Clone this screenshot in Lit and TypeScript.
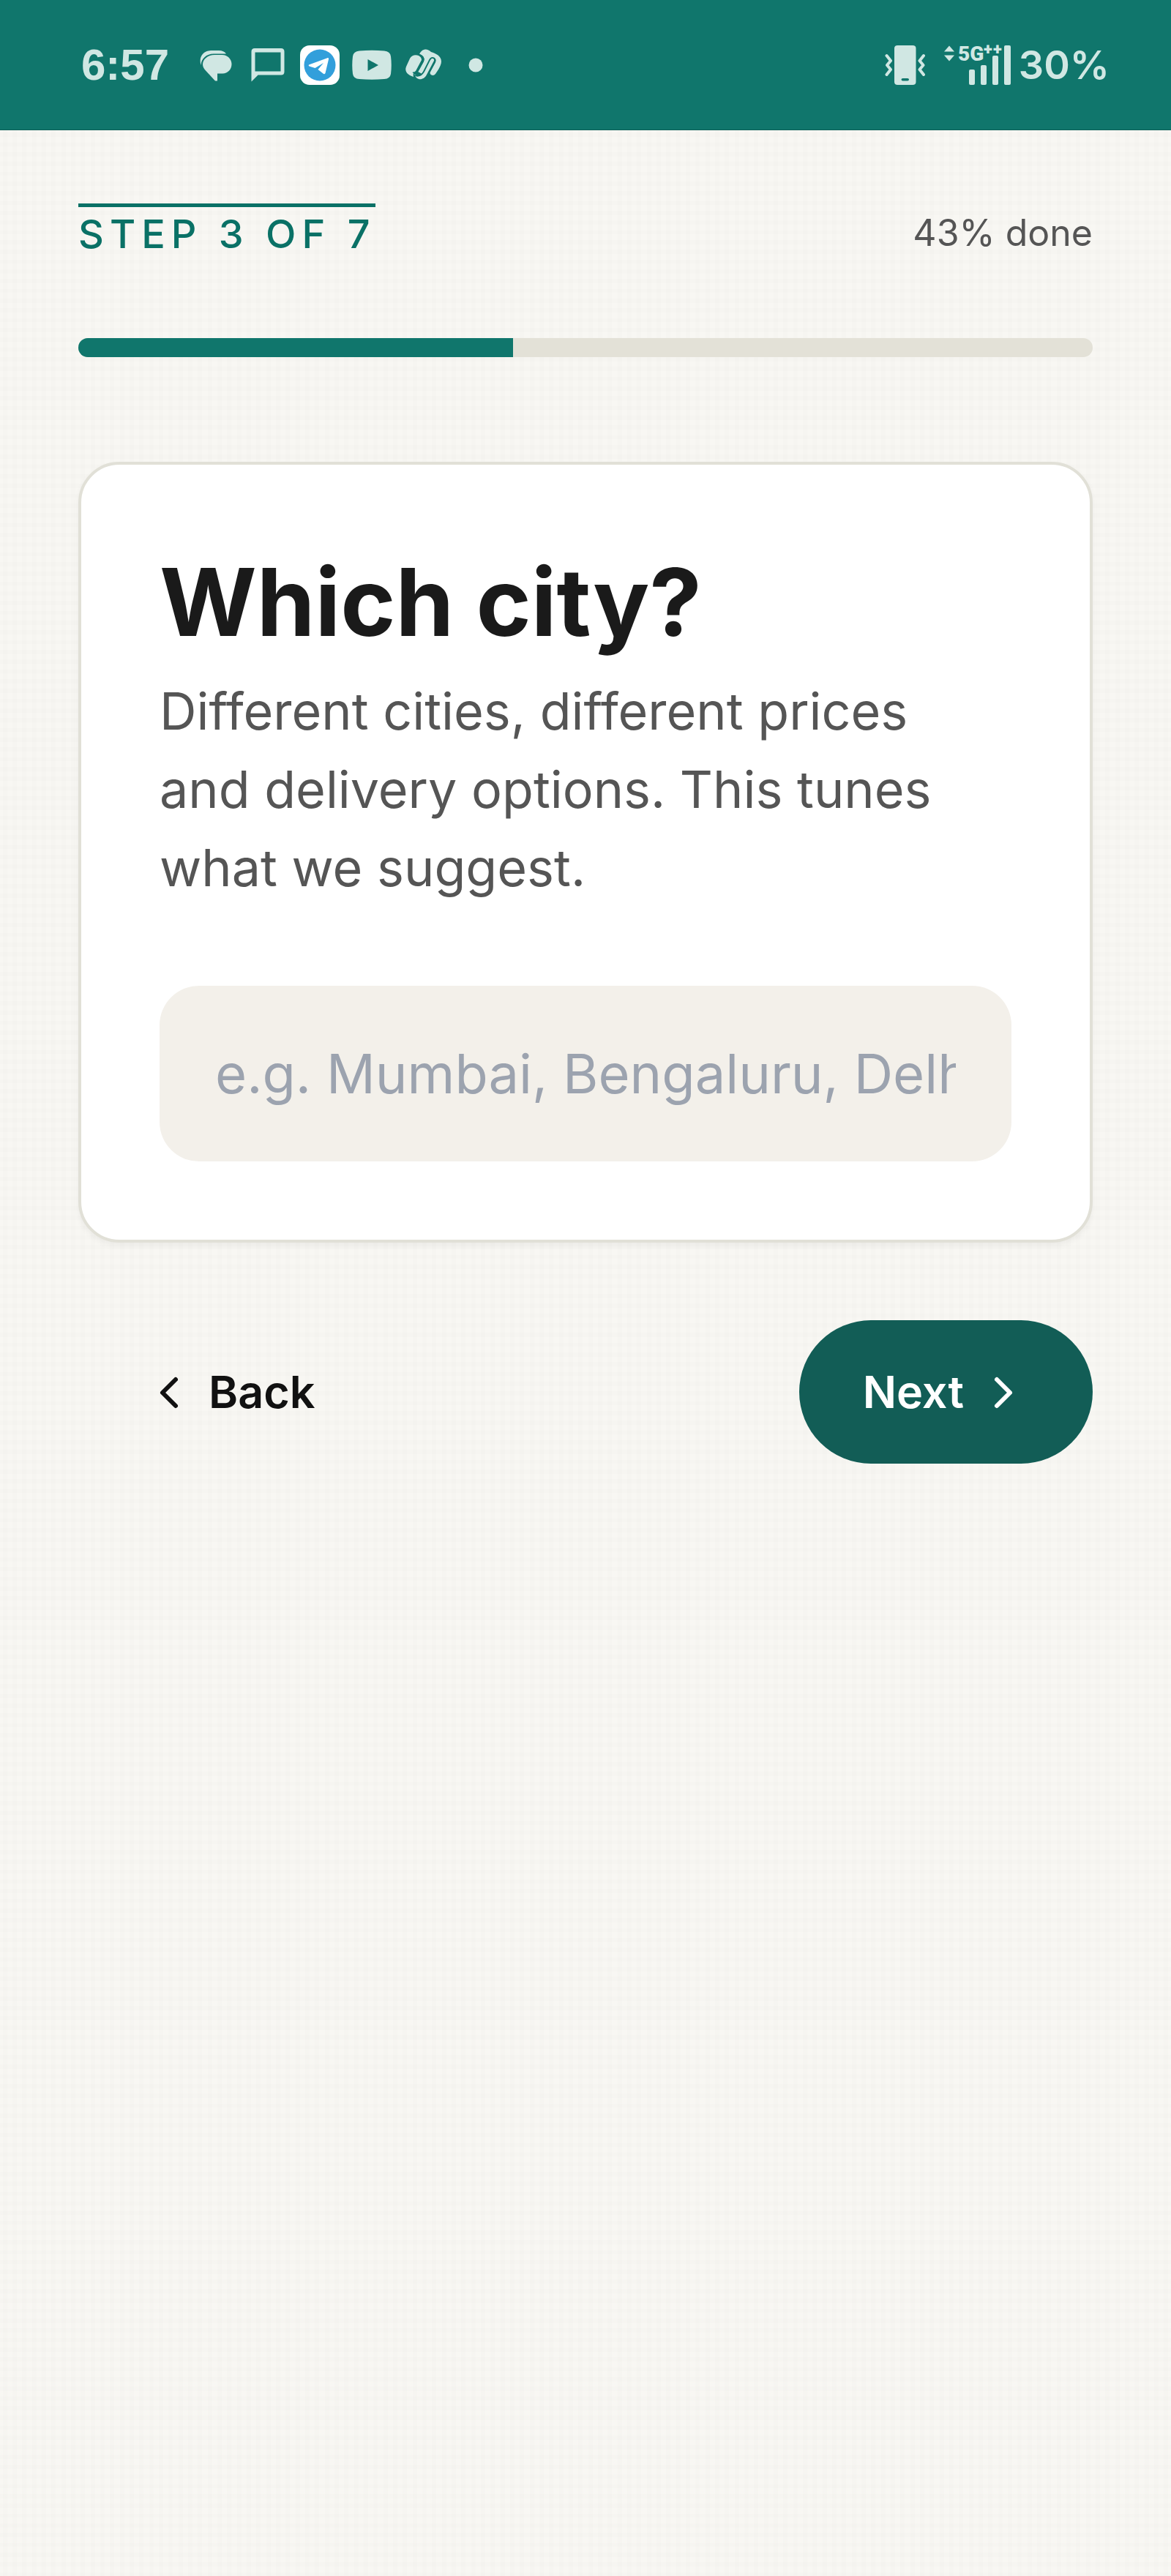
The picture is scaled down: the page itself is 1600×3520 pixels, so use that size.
import { LitElement, html, css, svg } from "lit";
import { customElement, property, state } from "lit/decorators.js";

@customElement("status-bar")
class StatusBar extends LitElement {
  static styles = css`
    :host {
      display: flex;
      align-items: center;
      justify-content: space-between;
      box-sizing: border-box;
      height: 178px;
      padding: 0 84px 0 111px;
      background: #10766c;
      color: #d0e7e3;
      border-bottom: 1px solid #0c5f57;
    }
    .group {
      display: flex;
      align-items: center;
    }
    .apps {
      display: flex;
      align-items: center;
      gap: 17px;
      margin-left: 37px;
    }
    .time {
      font: 700 60px/64px "Liberation Sans", Arial, sans-serif;
    }
    .battery {
      margin-left: 11px;
      font: 600 54px/60px Inter, sans-serif;
    }
    .vibrate {
      margin-right: 24px;
    }
    svg {
      display: block;
      fill: currentColor;
    }
    .net {
      font: 900 28px "Roboto", sans-serif;
    }
    .plus {
      font-size: 22px;
    }
  `;

  render() {
    return html`
      <div class="group">
        <span class="time">6:57</span>
        <div class="apps">
          <svg width="54" height="54" viewBox="0 0 54 54" aria-hidden="true">
            <path d="M6.500 27C3 13 12 7.500 20 7H31Q38 7 41 11.500H24C14 11.500 7 18 6.500 27Z" />
            <path d="M25 13H35.500C43 13 48.500 19 48.500 25.500C48.500 33 43 38.500 36 38.500H29V48.500H26L13.500 35C10.500 32 9 29 9 26C9 19 16 13 25 13Z" />
          </svg>
          <svg width="54" height="54" viewBox="0 0 54 54" aria-hidden="true">
            <path fill-rule="evenodd" d="M9 4H45Q49.500 4 49.500 8.500V36Q49.500 40.500 45 40.500H13.500L4.500 49.500V8.500Q4.500 4 9 4ZM9.500 9.500V35.500H44.500V9.500Z" />
          </svg>
          <svg width="54" height="54" viewBox="0 0 54 54" aria-hidden="true">
            <rect width="54" height="54" rx="13" fill="#fff" />
            <circle cx="27" cy="27" r="21.500" fill="#329fdb" />
            <path d="M12 26.500L38 17Q39.500 17 39 19L34.500 38Q33.500 40 31.500 38.500L24.500 33L32 24L20.500 31L12.500 28.500Q11 27.500 12 26.500Z" fill="#fff" />
          </svg>
          <svg width="54" height="54" viewBox="0 0 54 54" aria-hidden="true">
            <path fill-rule="evenodd" d="M10 7.500Q27 6 44 7.500Q52 8 53 15Q54.500 27 53 39Q52 45.500 44 46Q27 47.500 10 46Q2 45.500 1 39Q-.5 27 1 15Q2 8 10 7.500ZM21.500 19V35L36 27Z" />
          </svg>
          <svg width="54" height="54" viewBox="0 0 54 54" aria-hidden="true">
            <path d="M20 14C15 12 10 14 8 18L3 29C0 36 6 41 13 43C12 39 13 37 16 35L24 20Q24 16 20 14Z" />
            <path d="M21 12C25 4 32 4 37 9C43 11 51 14 51 22C51 26 49 29 47 33L43 39C40 43 34 40 36 36L43 23C45 17 38 14 35 20L25 38C24 40 22 37 19 36L27 22C29 17 26 14 21 12Z" />
            <path d="M14 39C17 43 23 42 26 37L36 19C38 16 42 18 41 21L31 40C27 48 17 49 14 39Z" />
            <path d="M20 12C26 14 28 18 26 22L20 33C18 37 15 38 12 37M14 41C20 43 24 41 27 36L35 20C38 14 45 18 42 23L35 36" fill="none" stroke="#10766c" stroke-width="1.800" />
          </svg>
          <svg width="54" height="54" viewBox="0 0 54 54" aria-hidden="true">
            <circle cx="27" cy="27" r="9.500" />
          </svg>
        </div>
      </div>
      <div class="group">
        <svg class="vibrate" width="56" height="56" viewBox="0 0 56 56" aria-label="Vibrate" role="img">
          <path fill-rule="evenodd" d="M17.500 1H38Q42.500 1 42.500 5V51Q42.500 55 38 55H17.500Q13 55 13 51V5Q13 1 17.500 1ZM22.500 47.500Q22.500 49.500 24.500 49.500H31Q33 49.500 33 47.500Q33 46 31 46H24.500Q22.500 46 22.500 47.500Z" />
          <path d="M2.500 15L8 22L3 28L8 34L2.500 41M53 15L47.500 22L52.500 28L47.500 34L53 41" fill="none" stroke="currentColor" stroke-width="4" stroke-linecap="round" stroke-linejoin="round" />
        </svg>
        <svg width="92" height="72" viewBox="0 -8 92 72" aria-hidden="true">
          <path d="M1 9.500L8 1.500L15 9.500ZM1 14.500H15L8 22.500Z" />
          <text class="net" x="20" y="22">5G<tspan class="plus" x="55" y="14">+</tspan><tspan class="plus" x="68" y="14">+</tspan></text>
          <rect x="35" y="34" width="8" height="21" rx="2" />
          <rect x="51" y="28" width="8" height="27" rx="2" />
          <rect x="67" y="15" width="8" height="40" rx="2" />
          <rect x="83" y="1" width="9" height="54" rx="2" />
        </svg>
        <span class="battery">30%</span>
      </div>
    `;
  }
}

@customElement("step-progress")
class StepProgress extends LitElement {
  @property({ type: Number }) step = 3;
  @property({ type: Number }) total = 7;

  static styles = css`
    :host {
      display: block;
    }
    .row {
      display: flex;
      align-items: flex-start;
      justify-content: space-between;
      margin-bottom: 112px;
    }
    .step {
      border-top: 5px solid #0a7166;
      padding-top: 7px;
      color: #0a7166;
      font-weight: 500;
      font-size: 54px;
      line-height: 60px;
      letter-spacing: 8px;
      text-transform: uppercase;
    }
    .done {
      padding-top: 8px;
      color: #555;
      font-size: 50px;
      line-height: 64px;
    }
    .track {
      height: 26px;
      border-radius: 13px;
      background: #e3e1d7;
      overflow: hidden;
    }
    .fill {
      height: 100%;
      background: #10766c;
    }
  `;

  render() {
    const percent = (this.step / this.total) * 100;
    return html`
      <div class="row">
        <span class="step">Step ${this.step} of ${this.total}</span>
        <span class="done">${Math.round(percent)}% done</span>
      </div>
      <div class="track" role="progressbar" aria-label="Progress" aria-valuemin="0" aria-valuemax="100" aria-valuenow=${Math.round(percent)}>
        <div class="fill" style="width:${percent}%"></div>
      </div>
    `;
  }
}

const chevron = (d: string) => svg`<path d=${d} fill="none" stroke="currentColor" stroke-width="6" stroke-linecap="round" stroke-linejoin="round" />`;

@customElement("app-root")
class AppRoot extends LitElement {
  @state() private city = "";

  static styles = css`
    :host {
      display: block;
      min-height: 100vh;
      font-family: Inter, "DejaVu Sans", sans-serif;
      color: #1a1a1a;
      background-color: #f8f7f3;
      background-image:
        linear-gradient(90deg, transparent 4px, #00000002 4px 10px, transparent 10px 17px, #00000002 17px 23px, transparent 23px 30px, #00000002 30px 36px, transparent 36px),
        linear-gradient(transparent 8px, #00000002 8px 14px, transparent 14px 21px, #00000002 21px 27px, transparent 27px 35px, #00000002 35px);
      background-size: 40px 40px;
    }
    main {
      padding: 100px 107px;
    }
    .card {
      box-sizing: border-box;
      margin-top: 143px;
      padding: 116px 107px 107px;
      border: 4px solid #e1e0d7;
      border-radius: 56px;
      background: #fff;
      box-shadow: 0 4px 9px #0000000d;
    }
    h1 {
      margin: 0;
      font-size: 128px;
      line-height: 144px;
      font-weight: 700;
    }
    .hint {
      margin: 23px 0 108px;
      padding-right: 48px;
      color: #555;
      font-size: 70px;
      line-height: 107px;
    }
    .city {
      display: block;
      box-sizing: border-box;
      width: 100%;
      height: 240px;
      padding: 0 76px;
      border: 0;
      border-radius: 54px;
      background: #f3f0ea;
      color: #1a1a1a;
      font: 400 74px/96px Inter, "DejaVu Sans", sans-serif;
    }
    .city::placeholder {
      color: #9ca3af;
      opacity: 1;
    }
    .actions {
      display: flex;
      justify-content: space-between;
      margin-top: 106px;
    }
    button {
      display: flex;
      align-items: center;
      height: 196px;
      border: 0;
      border-radius: 98px;
      background: none;
      color: #111;
      font: 600 61px/72px Inter, "DejaVu Sans", sans-serif;
      gap: 26px;
    }
    .back {
      padding: 0 107px 0 98px;
    }
    .next {
      padding: 0 96px 0 87px;
      background: #125d56;
      color: #fff;
    }
    svg {
      display: block;
    }
  `;

  render() {
    return html`
      <status-bar></status-bar>
      <main>
        <step-progress .step=${3} .total=${7}></step-progress>
        <section class="card">
          <h1><label for="city">Which city?</label></h1>
          <p class="hint">Different cities, different prices and delivery options. This tunes what we suggest.</p>
          <input
            id="city"
            class="city"
            type="text"
            placeholder="e.g. Mumbai, Bengaluru, Delhi"
            .value=${this.city}
            @input=${(e: Event) => (this.city = (e.target as HTMLInputElement).value)}
          />
        </section>
        <nav class="actions">
          <button class="back" type="button">
            <svg width="54" height="54" viewBox="0 0 54 54" aria-hidden="true">${chevron("M35 10L17 28L35 46")}</svg>
            Back
          </button>
          <button class="next" type="button">
            Next
            <svg width="54" height="54" viewBox="0 0 54 54" aria-hidden="true">${chevron("M19 10L37 28L19 46")}</svg>
          </button>
        </nav>
      </main>
    `;
  }
}
